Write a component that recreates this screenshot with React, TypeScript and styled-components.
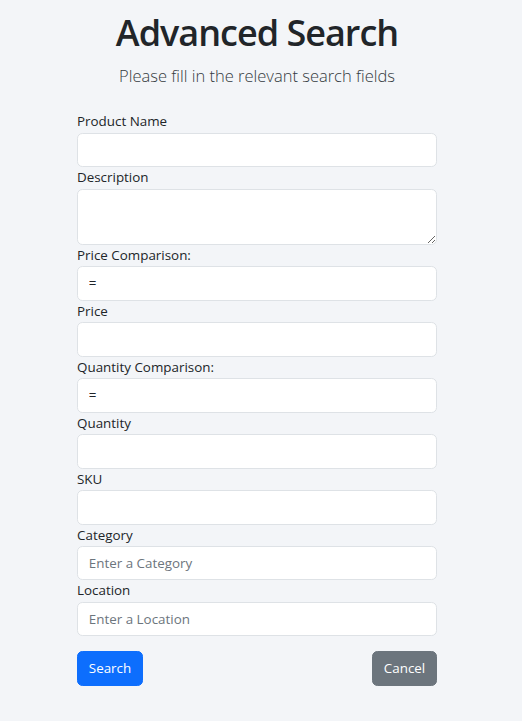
import React from "react";
import styled, { createGlobalStyle } from "styled-components";

const GlobalStyle = createGlobalStyle`
  html, body {
    margin: 0;
    padding: 0;
    background: #f3f5f8;
  }
  body {
    font-family: "Open Sans", "Noto Sans", sans-serif;
    color: #212529;
  }
  * {
    box-sizing: border-box;
  }
`;

const Page = styled.div`
  min-height: 721px;
  padding: 10px 8px 30px 0;
  display: flex;
  flex-direction: column;
  align-items: center;
`;

const Title = styled.h1`
  margin: 0;
  font-size: 36px;
  line-height: 46px;
  font-weight: 600;
  letter-spacing: -1px;
  color: #212529;
`;

const Lead = styled.p`
  margin: 6px 0 0;
  font-size: 16.5px;
  line-height: 27px;
  font-weight: 300;
  color: #343a40;
`;

const Form = styled.form`
  width: 360px;
  margin-top: 22px;
  display: flex;
  flex-direction: column;
`;

const Label = styled.label`
  display: block;
  font-size: 13.4px;
  line-height: 21.6px;
  color: #212529;
`;

const inputBase = `
  display: block;
  width: 100%;
  font-family: "Open Sans", "Noto Sans", sans-serif;
  font-size: 13.4px;
  line-height: 21.6px;
  color: #212529;
  background: #fff;
  border: 1px solid #dee2e6;
  border-radius: 5.4px;
  padding: 5.4px 10.8px;
  outline: none;
  &::placeholder {
    color: #6c757d;
  }
`;

const Input = styled.input`
  ${inputBase}
  height: 34.4px;
`;

const TextArea = styled.textarea`
  ${inputBase}
  height: 56px;
  resize: vertical;
`;

const ButtonRow = styled.div`
  display: flex;
  justify-content: space-between;
  margin-top: 15px;
`;

const Button = styled.button<{ $variant: "primary" | "secondary" }>`
  font-family: "Open Sans", "Noto Sans", sans-serif;
  font-size: 13.4px;
  line-height: 21.6px;
  padding: 5.4px 10.8px;
  border-radius: 5.4px;
  border: 1px solid
    ${(p) => (p.$variant === "primary" ? "#0d6efd" : "#6c757d")};
  background: ${(p) => (p.$variant === "primary" ? "#0d6efd" : "#6c757d")};
  color: #fff;
  cursor: pointer;
`;

type Field = {
  label: string;
  value?: string;
  placeholder?: string;
  multiline?: boolean;
};

const fields: Field[] = [
  { label: "Product Name" },
  { label: "Description", multiline: true },
  { label: "Price Comparison:", value: "=" },
  { label: "Price" },
  { label: "Quantity Comparison:", value: "=" },
  { label: "Quantity" },
  { label: "SKU" },
  { label: "Category", placeholder: "Enter a Category" },
  { label: "Location", placeholder: "Enter a Location" },
];

export default function App() {
  return (
    <>
      <GlobalStyle />
      <Page>
        <Title>Advanced Search</Title>
        <Lead>Please fill in the relevant search fields</Lead>
        <Form onSubmit={(e) => e.preventDefault()}>
          {fields.map((f, i) => (
            <div key={i}>
              <Label htmlFor={`field-${i}`}>{f.label}</Label>
              {f.multiline ? (
                <TextArea id={`field-${i}`} rows={2} />
              ) : (
                <Input
                  id={`field-${i}`}
                  defaultValue={f.value}
                  placeholder={f.placeholder}
                />
              )}
            </div>
          ))}
          <ButtonRow>
            <Button type="submit" $variant="primary">
              Search
            </Button>
            <Button type="button" $variant="secondary">
              Cancel
            </Button>
          </ButtonRow>
        </Form>
      </Page>
    </>
  );
}
